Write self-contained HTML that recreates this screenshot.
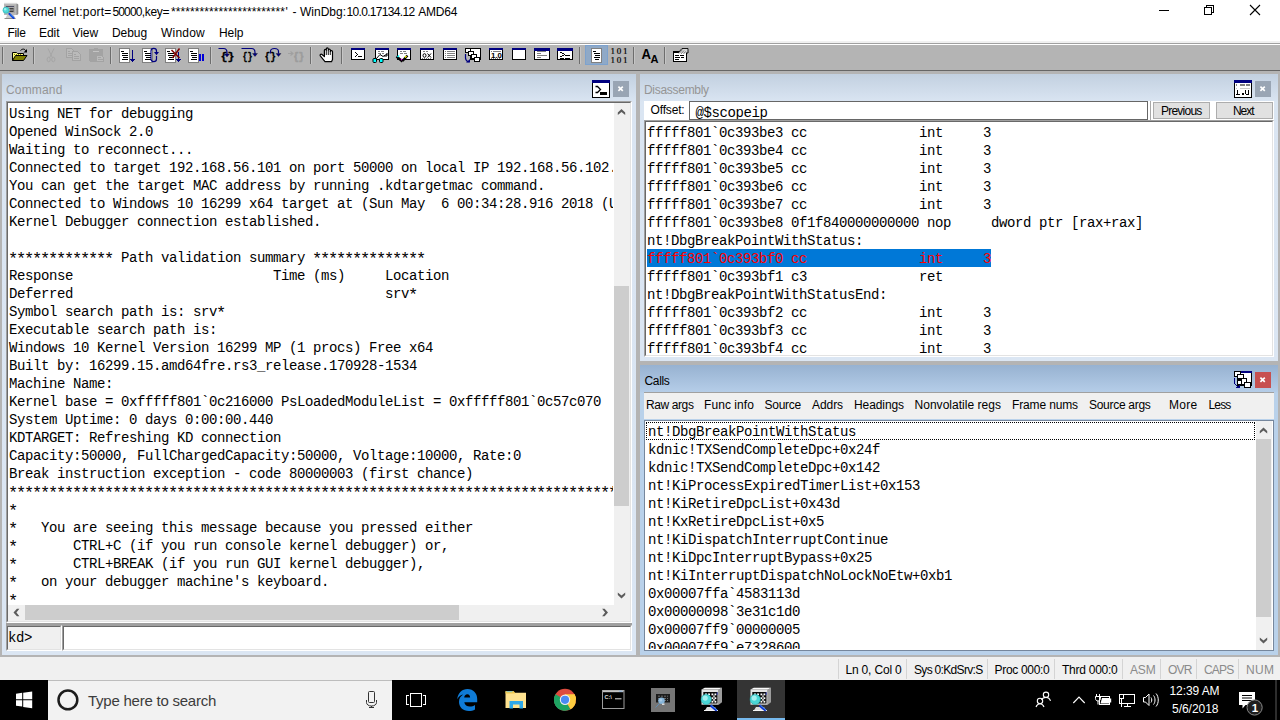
<!DOCTYPE html>
<html><head><meta charset="utf-8">
<style>
*{box-sizing:border-box;margin:0;padding:0}
html,body{width:1280px;height:720px;overflow:hidden;background:#b4b4b4;font-family:"Liberation Sans",sans-serif;font-size:12px;color:#000}
.abs{position:absolute}
.t{position:absolute;white-space:pre;line-height:16px;height:16px}
.mono{font-family:"Liberation Mono",monospace;font-size:14px;white-space:pre;line-height:20px;letter-spacing:-0.4014px}
#title{left:0;top:0;width:1280px;height:23px;background:#fff}
#menu{left:0;top:23px;width:1280px;height:20px;background:#fff}
#tb{left:0;top:41px;width:1280px;height:29px;background:linear-gradient(#f0f0f0 0,#f0f0f0 2px,#a0a0a0 2px,#a0a0a0 3px,#fff 3px,#fff 4px,#b4b4b4 4px)}
#tbline{left:0;top:70px;width:1280px;height:1px;background:#666}
.panel{position:absolute;background:linear-gradient(#c2d0e0 0,#dae5f2 28px,#dbe6f3 100%)}
.panel.act{background:linear-gradient(#97b2d1 0,#b5cde8 27px,#b9d1ea 28px,#b9d1ea 100%)}
.ast{font-size:17px;letter-spacing:-2.2017px;position:relative;top:2px;line-height:0;margin-left:-1.1px;margin-right:1.1px}
.sunk{position:absolute;border:1px solid;border-color:#a0a0a0 #fff #fff #a0a0a0}
.sunk>.in{position:absolute;left:0;top:0;right:0;bottom:0;border:1px solid;border-color:#696969 #e3e3e3 #e3e3e3 #696969;background:#fff;overflow:hidden}
.ln{position:absolute;height:18px}
.sb{position:absolute;background:#f0f0f0}
.thumb{position:absolute;background:#cdcdcd}
.btn{position:absolute;background:#e1e1e1;border:1px solid #adadad}
.xbtn{position:absolute;background:#9aa7b8}
#status{left:0;top:657px;width:1280px;height:23px;background:#f0f0f0}
.sep{position:absolute;top:659px;width:1px;height:20px;background:#d4d4d4}
#task{left:0;top:680px;width:1280px;height:40px;background:#000}
svg{position:absolute;overflow:visible}
</style></head><body>
<div id="title" class="abs"></div>
<div id="menu" class="abs"></div>
<div id="tb" class="abs"></div>
<div id="tbline" class="abs"></div>

<!-- Command panel -->
<div class="panel" style="left:2px;top:74px;width:634px;height:581px">
  <div class="sunk" style="left:4px;top:27px;width:626px;height:522px"><div class="in">
    <div class="abs" style="left:0;top:0;width:605px;height:502px;overflow:hidden"><div class="mono ln" style="left:1px;top:1px;">Using NET for debugging</div>
<div class="mono ln" style="left:1px;top:19px;">Opened WinSock 2.0</div>
<div class="mono ln" style="left:1px;top:37px;">Waiting to reconnect...</div>
<div class="mono ln" style="left:1px;top:55px;">Connected to target 192.168.56.101 on port 50000 on local IP 192.168.56.102.</div>
<div class="mono ln" style="left:1px;top:73px;">You can get the target MAC address by running .kdtargetmac command.</div>
<div class="mono ln" style="left:1px;top:91px;">Connected to Windows 10 16299 x64 target at (Sun May  6 00:34:28.916 2018 (UTC</div>
<div class="mono ln" style="left:1px;top:109px;">Kernel Debugger connection established.</div>
<div class="mono ln" style="left:1px;top:145px;"><span class="ast">*************</span> Path validation summary <span class="ast">**************</span></div>
<div class="mono ln" style="left:1px;top:163px;">Response                         Time (ms)     Location</div>
<div class="mono ln" style="left:1px;top:181px;">Deferred                                       srv<span class="ast">*</span></div>
<div class="mono ln" style="left:1px;top:199px;">Symbol search path is: srv<span class="ast">*</span></div>
<div class="mono ln" style="left:1px;top:217px;">Executable search path is: </div>
<div class="mono ln" style="left:1px;top:235px;">Windows 10 Kernel Version 16299 MP (1 procs) Free x64</div>
<div class="mono ln" style="left:1px;top:253px;">Built by: 16299.15.amd64fre.rs3_release.170928-1534</div>
<div class="mono ln" style="left:1px;top:271px;">Machine Name:</div>
<div class="mono ln" style="left:1px;top:289px;">Kernel base = 0xfffff801`0c216000 PsLoadedModuleList = 0xfffff801`0c57c070</div>
<div class="mono ln" style="left:1px;top:307px;">System Uptime: 0 days 0:00:00.440</div>
<div class="mono ln" style="left:1px;top:325px;">KDTARGET: Refreshing KD connection</div>
<div class="mono ln" style="left:1px;top:343px;">Capacity:50000, FullChargedCapacity:50000, Voltage:10000, Rate:0</div>
<div class="mono ln" style="left:1px;top:361px;">Break instruction exception - code 80000003 (first chance)</div>
<div class="mono ln" style="left:1px;top:379px;"><span class="ast">******************************************************************************************</span></div>
<div class="mono ln" style="left:1px;top:397px;"><span class="ast">*</span></div>
<div class="mono ln" style="left:1px;top:415px;"><span class="ast">*</span>   You are seeing this message because you pressed either</div>
<div class="mono ln" style="left:1px;top:433px;"><span class="ast">*</span>       CTRL+C (if you run console kernel debugger) or,</div>
<div class="mono ln" style="left:1px;top:451px;"><span class="ast">*</span>       CTRL+BREAK (if you run GUI kernel debugger),</div>
<div class="mono ln" style="left:1px;top:469px;"><span class="ast">*</span>   on your debugger machine&#x27;s keyboard.</div>
<div class="mono ln" style="left:1px;top:487px;"><span class="ast">*</span></div></div>
    <div class="sb" style="left:606px;top:0;width:16px;height:502px"><div class="thumb" style="left:0;top:183px;width:15px;height:220px"></div></div>
    <div class="sb" style="left:0;top:502px;width:622px;height:16px"><div class="thumb" style="left:17px;top:0;width:434px;height:15px"></div></div>
  </div></div>
  <div class="abs" style="left:4px;top:549px;width:626px;height:2px;background:#a0a0a0"></div>
  <div class="sunk" style="left:4px;top:551px;width:56px;height:26px"><div class="in" style="background:#f0f0f0"><div class="mono ln" style="left:0;top:1px">kd&gt;</div></div></div>
  <div class="sunk" style="left:60px;top:551px;width:570px;height:26px"><div class="in"></div></div>
</div>

<!-- Disassembly panel -->
<div class="panel" style="left:640px;top:74px;width:638px;height:287px">
  <div class="abs" style="left:4px;top:27px;width:630px;height:19px;background:#fff"></div>
  <div class="abs" style="left:49px;top:27px;width:459px;height:19px;border:1px solid #666;background:#fff;overflow:hidden"><div class="mono ln" style="left:5.500px;top:0.700px">@$scopeip</div></div>
  <div class="abs" style="left:510px;top:27px;width:1px;height:19px;background:#a8a8a8"></div>
  <div class="btn" style="left:513px;top:28px;width:57px;height:17px"></div>
  <div class="btn" style="left:576px;top:28px;width:57px;height:17px"></div>
  <div class="sunk" style="left:4px;top:46px;width:630px;height:237px"><div class="in"><div class="mono ln" style="left:1px;top:1px;">fffff801`0c393be3 cc              int     3</div>
<div class="mono ln" style="left:1px;top:19px;">fffff801`0c393be4 cc              int     3</div>
<div class="mono ln" style="left:1px;top:37px;">fffff801`0c393be5 cc              int     3</div>
<div class="mono ln" style="left:1px;top:55px;">fffff801`0c393be6 cc              int     3</div>
<div class="mono ln" style="left:1px;top:73px;">fffff801`0c393be7 cc              int     3</div>
<div class="mono ln" style="left:1px;top:91px;">fffff801`0c393be8 0f1f840000000000 nop     dword ptr [rax+rax]</div>
<div class="mono ln" style="left:1px;top:109px;">nt!DbgBreakPointWithStatus:</div>
<div class="mono ln" style="left:1px;top:127px;background:#0078d7;color:#ff0000;">fffff801`0c393bf0 cc              int     3</div>
<div class="mono ln" style="left:1px;top:145px;">fffff801`0c393bf1 c3              ret</div>
<div class="mono ln" style="left:1px;top:163px;">nt!DbgBreakPointWithStatusEnd:</div>
<div class="mono ln" style="left:1px;top:181px;">fffff801`0c393bf2 cc              int     3</div>
<div class="mono ln" style="left:1px;top:199px;">fffff801`0c393bf3 cc              int     3</div>
<div class="mono ln" style="left:1px;top:217px;">fffff801`0c393bf4 cc              int     3</div></div></div>
</div>

<!-- Calls panel -->
<div class="panel act" style="left:640px;top:365px;width:638px;height:290px">
  <div class="abs" style="left:4px;top:27px;width:630px;height:27px;background:#f0f0f0;border-top:1px solid #a0a0a0"></div>
  <div class="abs" style="left:4px;top:55px;width:630px;height:231px;border:1px solid #76879d;background:#fff;overflow:hidden">
    <div class="abs" style="left:0;top:0;width:611px;height:228px;overflow:hidden"><div class="mono ln" style="left:3px;top:1px;">nt!DbgBreakPointWithStatus</div>
<div class="mono ln" style="left:3px;top:19px;">kdnic!TXSendCompleteDpc+0x24f</div>
<div class="mono ln" style="left:3px;top:37px;">kdnic!TXSendCompleteDpc+0x142</div>
<div class="mono ln" style="left:3px;top:55px;">nt!KiProcessExpiredTimerList+0x153</div>
<div class="mono ln" style="left:3px;top:73px;">nt!KiRetireDpcList+0x43d</div>
<div class="mono ln" style="left:3px;top:91px;">nt!KxRetireDpcList+0x5</div>
<div class="mono ln" style="left:3px;top:109px;">nt!KiDispatchInterruptContinue</div>
<div class="mono ln" style="left:3px;top:127px;">nt!KiDpcInterruptBypass+0x25</div>
<div class="mono ln" style="left:3px;top:145px;">nt!KiInterruptDispatchNoLockNoEtw+0xb1</div>
<div class="mono ln" style="left:3px;top:163px;">0x00007ffa`4583113d</div>
<div class="mono ln" style="left:3px;top:181px;">0x00000098`3e31c1d0</div>
<div class="mono ln" style="left:3px;top:199px;">0x00007ff9`00000005</div>
<div class="mono ln" style="left:3px;top:217px;">0x00007ff9`e7328600</div></div>
    <div class="abs" style="left:1px;top:1px;width:609px;height:18px;border:1px dotted #000"></div>
    <div class="sb" style="left:611px;top:0;width:16px;height:229px"><div class="thumb" style="left:0;top:18px;width:15px;height:178px"></div></div>
  </div>
</div>

<div id="status" class="abs"></div>
<div class="sep" style="left:838px"></div><div class="sep" style="left:906px"></div><div class="sep" style="left:987px"></div><div class="sep" style="left:1054px"></div><div class="sep" style="left:1122px"></div><div class="sep" style="left:1160px"></div><div class="sep" style="left:1196px"></div><div class="sep" style="left:1238px"></div>
<div id="task" class="abs"></div>
<div class="abs" style="left:48px;top:680px;width:344px;height:40px;background:#f2f2f2"></div>
<svg style="left:0;top:0" width="1280" height="75" viewBox="0 0 1280 75" shape-rendering="crispEdges">
<defs>
<g id="win14"><rect x="0.5" y="0.5" width="13" height="11" fill="#fff" stroke="#000"/><rect x="0" y="0" width="14" height="2" fill="#000080"/></g>
<g id="win16"><rect x="0.5" y="0.5" width="15" height="11" fill="#fff" stroke="#000"/><rect x="0" y="0" width="16" height="3" fill="#000080"/></g>
<g id="page"><rect x="0.5" y="0.5" width="10" height="14" fill="#fff" stroke="#808080"/><path d="M2 3.5h3M3 5.5h6M3 7.5h6M4 9.5h5M3 11.5h6" stroke="#000" fill="none"/></g>
<g id="sep"><rect x="0" y="0" width="1" height="17" fill="#6d6d6d"/><rect x="1" y="0" width="1" height="17" fill="#c6c6c6"/></g>
</defs>
<!-- separators -->
<use href="#sep" x="2" y="47"/><use href="#sep" x="33" y="47"/><use href="#sep" x="110" y="47"/><use href="#sep" x="210" y="47"/><use href="#sep" x="310" y="47"/><use href="#sep" x="341" y="47"/><use href="#sep" x="579" y="47"/><use href="#sep" x="633" y="47"/><use href="#sep" x="664" y="47"/>
<!-- open folder -->
<g shape-rendering="auto">
<path d="M12.5 60.5V52.5h4l1 1h6v3" fill="#ffff80" stroke="#000" stroke-width="1"/>
<path d="M12.5 60.5l3-5h11.5l-3.5 5z" fill="#808000" stroke="#000" stroke-width="1"/>
<path d="M14 54.5h8" stroke="#808000" stroke-dasharray="1 1"/>
<path d="M20.5 50.5c2-2 4.5-2 5.5 1" fill="none" stroke="#000"/><path d="M27 49v3.500h-3.500z" fill="#000"/>
</g>
<!-- scissors (disabled) -->
<g shape-rendering="auto" fill="none" stroke="#a6a6a6" stroke-width="1">
<path d="M48 48.500l4.300 9M54 48.500l-4.300 9"/><ellipse cx="48.700" cy="59.500" rx="1.600" ry="2.300"/><ellipse cx="53.300" cy="59.500" rx="1.600" ry="2.300"/>
</g>
<!-- copy (disabled) -->
<g fill="#bababa" stroke="#a3a3a3">
<path d="M66.500 48.500h5l2 2v7h-7z"/><path d="M68 51.500h2M68 53.500h4M68 55.500h4" />
<path d="M72.500 51.500h5l3 3v6h-8z"/><path d="M74 54.500h2M74 56.500h5M74 58.500h5"/>
</g>
<!-- paste (disabled) -->
<g>
<rect x="89" y="49" width="14" height="12.500" rx="1" fill="#a3a3a3"/><rect x="94" y="48" width="4" height="1.500" fill="#a3a3a3"/><rect x="93" y="51" width="6" height="1" fill="#c4c4c4"/>
<path d="M96.500 55.500h5l2 2v4h-7z" fill="#bababa" stroke="#a3a3a3"/><path d="M97.500 57.500h3M97.500 59.500h5" stroke="#a3a3a3"/>
</g>
<!-- go -->
<use href="#page" x="119" y="48"/>
<path d="M132.500 50v10" stroke="#000080"/><path d="M130 59h5v1h-1v1h-1v1h-1v-1h-1v-1h-1z" fill="#000080"/>
<!-- restart -->
<use href="#page" x="142" y="48"/>
<g shape-rendering="auto"><path d="M156.500 52v-1c0-3.500-5.500-3.500-5.500 0v8c0 3.500 5.500 3.500 5.500 0v-3" fill="none" stroke="#000080" stroke-width="1.200"/><path d="M154 52h5l-2.500 3.200z" fill="#000080"/></g>
<!-- stop debugging -->
<use href="#page" x="165" y="48"/>
<path d="M178.500 52v8" stroke="#000080"/><path d="M176 59h5v1h-1v1h-1v1h-1v-1h-1v-1h-1z" fill="#000080"/>
<g shape-rendering="auto"><path d="M171.500 50l8 8M179.500 48.500l-7 9.500" stroke="#800000" stroke-width="1.500" fill="none"/></g>
<!-- break -->
<use href="#page" x="188" y="48"/>
<rect x="199" y="54" width="2" height="7" fill="#0000d8"/><rect x="202" y="54" width="2" height="7" fill="#0000d8"/>
<!-- step into -->
<g shape-rendering="auto" font-family="Liberation Mono" font-weight="bold" font-size="11.500" fill="#000" stroke="#000" stroke-width="0.300">
<text x="220.500" y="59.500" textLength="14" lengthAdjust="spacingAndGlyphs">{}</text>
<path d="M218.500 48.500h5c3 0 3.500 1.500 3.500 4v2" fill="none" stroke="#000080" stroke-width="1.200"/><path d="M224.500 54h5l-2.500 3z" fill="#000080"/>
<!-- step over -->
<text x="242.500" y="59.500" textLength="10" lengthAdjust="spacingAndGlyphs">{}</text>
<path d="M241.500 48.500h10c3 0 3.500 1.500 3.500 4v1.500" fill="none" stroke="#000080" stroke-width="1.200"/><path d="M252.500 53.500h5l-2.500 3z" fill="#000080"/>
<!-- step out -->
<text x="264.500" y="59.500" textLength="11.500" lengthAdjust="spacingAndGlyphs">{}</text>
<path d="M270.500 53.500v-2c0-4 8-4 8 0v2" fill="none" stroke="#000080" stroke-width="1.200"/><path d="M276 53.500h5l-2.500 3z" fill="#000080"/>
<!-- run to cursor disabled -->
<text x="293.500" y="60" textLength="10.500" lengthAdjust="spacingAndGlyphs" fill="#9c9c9c" stroke="#9c9c9c" stroke-width="0.700" font-weight="bold">{}</text>
<path d="M288 53.500h5M290.500 51.500l2.500 2-2.500 2" fill="none" stroke="#a0a0a0" stroke-width="1.100"/>
<!-- hand -->
<path d="M324.400 56.500V50.300c0-1.300 1.900-1.300 1.900 0V49c0-1.400 2-1.400 2 0v1c0-1.300 2-1.300 2 0v1.500c0-1.300 2.200-1.300 2.200 0.300V59.500l-1 2.200H325l-4.700-5.800c-0.800-1.200 0.600-2.300 1.700-1.400z" fill="#fff" stroke="#000" stroke-width="1.200" stroke-linejoin="round"/>
<path d="M326.300 50.300v4.700M328.300 50v5M330.300 51.500v3.500" stroke="#000" stroke-width="0.900"/>
</g>
<!-- window icons -->
<use href="#win14" x="351" y="48"/><path d="M355 52.500h1M356 53.500h1M357 54.500h1M356 55.500h1M355 56.500h1M358 56.500h4" stroke="#000"/>
<use href="#win14" x="375" y="48"/><path d="M378 51.500h2M381 51.500h3M378 53.500h3M382 53.500h2" stroke="#808080"/>
<g shape-rendering="auto"><path d="M376 59l4-4.500 3 2 4-2.500" fill="none" stroke="#000"/><path d="M387 53v3h-3" fill="none" stroke="#000"/><rect x="373" y="58.500" width="3.500" height="4" rx="1" fill="#00ffff" stroke="#000"/><rect x="379.500" y="58.500" width="3.500" height="4" rx="1" fill="#00ffff" stroke="#000"/><path d="M376.500 59.500h3" stroke="#000"/></g>
<use href="#win14" x="397" y="48"/><path d="M400 51.500h2M403 51.500h3M400 53.500h3M404 53.500h3" stroke="#808080"/>
<g shape-rendering="auto"><path d="M396.500 56.500l6 5" stroke="#000" stroke-width="2.400"/><path d="M397.500 57l1.500-1.500" stroke="#00ffff" stroke-width="1.500"/><path d="M401 60l1.500-1" stroke="#ff00ff" stroke-width="1.500"/><path d="M402.500 61l5-5.500" stroke="#000" stroke-width="2.400"/><path d="M405 57.500l1.500-1.500" stroke="#ffff00" stroke-width="1.500"/></g>
<use href="#win14" x="420" y="48"/><path d="M423 51.500h2M426 51.500h2" stroke="#808080"/>
<g shape-rendering="auto" fill="none" stroke="#000"><ellipse cx="424.500" cy="55.500" rx="1.500" ry="1.800"/><path d="M427.500 53.500l3.500 4M431 53.500l-3.500 4"/><path d="M422 58.500h10" stroke="#808080" stroke-dasharray="1 1"/></g>
<use href="#win14" x="443" y="48"/><path d="M445 51.500h1M447 51.500h8M445 53.500h1M447 53.500h8M445 55.500h1M447 55.500h8M445 57.500h1M447 57.500h8" stroke="#808080"/>
<!-- call stack -->
<rect x="472" y="48" width="9" height="2" fill="#000080"/><rect x="470.500" y="48.500" width="10" height="11" fill="#fff" stroke="#000"/>
<g fill="#fff" stroke="#000"><rect x="465.500" y="48.500" width="5" height="4"/><rect x="468.500" y="51.500" width="5" height="4"/><rect x="471.500" y="54.500" width="5" height="4"/><rect x="474.500" y="57.500" width="5" height="4"/></g>
<g shape-rendering="auto"><path d="M465.500 54v4c0 2 1 3 3 4" fill="none" stroke="#000080" stroke-width="1.200"/><path d="M466 62.500h4v-3.500z" fill="#000080"/></g>
<use href="#win14" x="489" y="48"/><path d="M491 51.500h1M493 51.500h8" stroke="#808080"/>
<g shape-rendering="auto" font-family="Liberation Sans" font-weight="bold" font-size="7.500" fill="#000"><text x="491" y="58" textLength="11" lengthAdjust="spacingAndGlyphs">1.0</text></g>
<path d="M491 58.500h10" stroke="#808080" stroke-dasharray="1 1"/>
<use href="#win14" x="512" y="48"/>
<use href="#win16" x="534" y="48"/><path d="M537 51.500h9M537 53.500h4M537 55.500h10M537 57.500h4" stroke="#808080"/>
<use href="#win16" x="557" y="48"/><path d="M560 52.500h2M562 53.500h2M564 54.500h1M562 55.500h2M560 56.500h2M565 55.500h5M560 58.500h4M565 58.500h5" stroke="#000"/>
<!-- pressed source-mode -->
<rect x="585.500" y="45.500" width="22" height="19" fill="#8fa9c7" stroke="#7da2ce"/>
<rect x="591.500" y="48.500" width="10" height="14" fill="#fff" stroke="#808080"/><path d="M593 51.500h3M594 53.500h6M595 55.500h5M594 57.500h6M595 59.500h4" stroke="#000"/>
<!-- 101 101 -->
<g shape-rendering="auto" font-family="Liberation Serif" font-size="9" fill="#000" stroke="#000" stroke-width="0.200"><text x="610.500" y="54.300" textLength="17" lengthAdjust="spacing">101</text><text x="610.500" y="63.300" textLength="17" lengthAdjust="spacing">101</text></g>
<!-- AA -->
<g shape-rendering="auto" font-family="Liberation Sans" font-weight="bold" fill="#000"><text x="641.500" y="59" font-size="14" textLength="9.500" lengthAdjust="spacingAndGlyphs">A</text><text x="650.500" y="62.500" font-size="10" textLength="8" lengthAdjust="spacingAndGlyphs">A</text></g>
<!-- options -->
<rect x="673.500" y="51.500" width="13" height="10" fill="#fff" stroke="#000" stroke-width="1"/><rect x="673" y="51" width="8" height="2" fill="#000"/>
<path d="M675 55.500h4M680 55.500h4M675 57.500h5M681 57.500h3M675 59.500h4" stroke="#000"/>
<g shape-rendering="auto"><path d="M678 53l4-4.500h6v4.500h-2" fill="#d8d8d8" stroke="#000" stroke-width="0.900"/><path d="M679 53.500l3.500-4M681 54l3-3.500M683.500 54l2-2.500" stroke="#555" stroke-width="0.700"/></g>
</svg>

<svg style="left:0;top:0" width="1280" height="680" viewBox="0 0 1280 680">
<defs>
<path id="chev" d="M-3.700 2.900L-3.700 0.400L0 -3L3.700 0.400L3.700 2.900L0 -0.100z" fill="#5c5c5c"/>
<g id="xw"><path d="M-2.200 -2.100L2.200 2.100M2.200 -2.100L-2.200 2.100" stroke="#fff" stroke-width="1.700" fill="none"/></g>
</defs>
<!-- app icon -->
<g>
<path d="M4 3.500h13l1.200 1v9.500l-1.200 1h-13z" fill="#b9b9b9"/><path d="M16.500 3.500l1.700 1v9.500l-1.700 1z" fill="#8d8d8d"/><path d="M4 3.300h13" stroke="#d9d9d9" stroke-width="0.800"/>
<rect x="5" y="5.500" width="10" height="7.500" fill="#a9a9a9"/><rect x="6" y="6" width="8" height="0.800" fill="#3a3a55"/><rect x="9.500" y="8" width="4" height="0.800" fill="#222"/><rect x="9.500" y="11" width="4" height="0.800" fill="#222"/><rect x="10.500" y="8.500" width="1" height="2.500" fill="#555"/><rect x="12.500" y="8.500" width="1" height="2.500" fill="#555"/>
<path d="M7 15h7l1 2.500 1 1h-11l1-1z" fill="#c9c9c9"/><path d="M4.500 18.500h11" stroke="#8a8a8a" stroke-width="1"/>
<circle cx="6" cy="10.200" r="3.100" fill="#4fd8d8" stroke="#2aa" stroke-width="0.500"/><circle cx="5.200" cy="9.300" r="1.200" fill="#9ff0f0"/>
<path d="M9.300 13.800l4.300 4.200" stroke="#0a35d8" stroke-width="1.900" stroke-linecap="round"/><path d="M10 14.200l3.300 3.300" stroke="#29a9ff" stroke-width="0.700"/>
</g>
<!-- window controls -->
<g shape-rendering="crispEdges" fill="none" stroke="#000" stroke-width="1">
<path d="M1159 10.500h10"/>
<rect x="1204.500" y="7.500" width="7" height="7"/><path d="M1206.500 7.500v-2h7v7h-2"/>
</g>
<path d="M1250 5l10 10M1260 5l-10 10" stroke="#000" stroke-width="1.100" fill="none"/>
<!-- command panel header icon -->
<g shape-rendering="crispEdges"><rect x="592.500" y="80.500" width="17" height="17" fill="#fff" stroke="#000"/><rect x="592" y="80" width="18" height="3" fill="#000080"/><rect x="600" y="92" width="7" height="3" fill="#000"/></g>
<path d="M595.500 86.500h2l3 3-3 3h-2" fill="none" stroke="#000" stroke-width="1.300"/>
<rect x="613" y="81" width="16" height="16" fill="#99a5b4"/><use href="#xw" x="620.600" y="88.700"/>
<!-- disassembly header icon -->
<g shape-rendering="crispEdges"><rect x="1234.500" y="80.500" width="17" height="17" fill="#fff" stroke="#000"/><rect x="1234" y="80" width="18" height="3" fill="#000080"/>
<path d="M1236 85h1M1240 85h5M1246 85h4" stroke="#808080" stroke-width="2"/><path d="M1236 88.500h1M1240 88.500h10" stroke="#c8c8c8"/>
<path d="M1237.500 90v4M1236 94.500h4" stroke="#000"/><rect x="1242" y="93" width="2" height="2" fill="#000"/><path d="M1245.500 90v4M1248.500 90v4M1246 94.500h3" stroke="#000"/></g>
<rect x="1255" y="81" width="16" height="16" fill="#99a5b4"/><use href="#xw" x="1262.600" y="88.700"/>
<!-- calls header icon -->
<g shape-rendering="crispEdges">
<rect x="1240" y="371" width="12" height="15" fill="#000"/><rect x="1241" y="371" width="11" height="2" fill="#000080"/><rect x="1241" y="373" width="10" height="12" fill="#fff"/>
<rect x="1234" y="371" width="7" height="6" fill="#000"/><rect x="1235" y="372" width="5" height="4" fill="#fff"/>
<rect x="1237" y="374" width="7" height="12" fill="#000"/><rect x="1238" y="375" width="5" height="3" fill="#fff"/><rect x="1238" y="381" width="3" height="3" fill="#fff"/>
<rect x="1241" y="378" width="6" height="7" fill="#000"/><rect x="1242" y="379" width="4" height="5" fill="#fff"/>
<rect x="1244" y="382" width="7" height="6" fill="#000"/><rect x="1245" y="383" width="5" height="4" fill="#fff"/>
<path d="M1234.500 378v6" stroke="#000080"/><path d="M1235 384h1v1h1v1h1v1h-1v-1h-1v-1h-1z" fill="#000080"/><path d="M1236 388h4v-3h-1v1h-1v1h-2z" fill="#000080"/>
</g>
<rect x="1255" y="372" width="16" height="16" fill="#c75050"/><use href="#xw" x="1262.600" y="379.700"/>
<!-- scroll arrows: command -->
<use href="#chev" x="621.500" y="112"/><use href="#chev" transform="translate(621.500 595.500) rotate(180)"/>
<use href="#chev" transform="translate(16.500 612.500) rotate(-90)"/><use href="#chev" transform="translate(605 612.500) rotate(90)"/>
<!-- scroll arrows: calls -->
<use href="#chev" x="1263.500" y="430.500"/><use href="#chev" transform="translate(1263.500 640.500) rotate(180)"/>
</svg>

<svg style="left:0;top:680px" width="1280" height="40" viewBox="0 680 1280 40">
<defs>
<g id="wdbg">
<path d="M0.500 2h17.200v15.200h-17.200z" fill="#e4e4e4"/><path d="M17.700 2l3.300-1.800v14.500l-3.300 2.500z" fill="#9c9c9c"/><path d="M0.500 2l3.300-1.800h17.200l-3.300 1.800z" fill="#fafafa"/>
<rect x="2.300" y="4.500" width="14.200" height="11.500" fill="#0c0c0c"/>
<g fill="#fff"><rect x="4" y="6" width="2" height="1.600"/><rect x="7" y="6" width="2" height="1.600"/><rect x="10.500" y="6" width="1.800" height="1.800"/><rect x="13.500" y="6" width="1.800" height="1.800"/><rect x="10.500" y="9.800" width="1.800" height="1.800"/><rect x="13.500" y="9.800" width="1.800" height="1.800"/><rect x="10.500" y="13.300" width="1.800" height="1.800"/><rect x="13.500" y="13.300" width="1.800" height="1.800"/><path d="M12 8l2 1.800M14 8l-2 1.800M12 11.500l2 1.800M14 11.500l-2 1.800" stroke="#fff" stroke-width="0.700"/></g>
<rect x="15.800" y="4.800" width="0.700" height="2.500" fill="#2233dd"/>
<path d="M6 19.500h8l1.500 2.500 1.500 1.300h-14l1.500-1.300z" fill="#dcdcdc"/><path d="M3 23h14" stroke="#fff" stroke-width="0.900"/>
<circle cx="5.200" cy="11.900" r="5.200" fill="#4ad6d6"/><circle cx="4.200" cy="10.600" r="2.600" fill="#a5f0f0"/><circle cx="5.200" cy="11.900" r="5.200" fill="none" stroke="#189a9a" stroke-width="0.500"/>
<path d="M9.500 17.800l6.300 5.400" stroke="#0a2fd0" stroke-width="2.300"/><path d="M10.500 17.800l5.800 5" stroke="#6cc4ff" stroke-width="0.700"/>
</g>
</defs>
<rect x="48" y="680" width="344" height="1" fill="#bdbdbd"/>
<!-- windows logo -->
<g fill="#fff"><path d="M16 693.700l6.200-0.900v6.400h-6.200z"/><path d="M23.200 692.700l9-1.200v7.700h-9z"/><path d="M16 700.200h6.200v6.400l-6.200-0.900z"/><path d="M23.200 700.200h9v8l-9-1.300z"/></g>
<!-- cortana -->
<circle cx="67.900" cy="699.900" r="9.400" fill="none" stroke="#1c1c1c" stroke-width="2.500"/>
<!-- mic -->
<g fill="none" stroke="#333" stroke-width="1"><rect x="368.500" y="691.500" width="6" height="11" rx="1"/><path d="M366.500 700v2.500c0 2 2 3.500 5 3.500s5-1.500 5-3.500v-2.500M371.500 706v1.500M369 707.500h5"/></g>
<!-- task view -->
<g fill="none" stroke="#fff" stroke-width="1" shape-rendering="crispEdges"><rect x="410.500" y="693.500" width="11" height="13"/><path d="M409 695.500h-2.500v9h2.500M423 695.500h2.500v9h-2.500"/></g>
<!-- edge -->
<path fill-rule="evenodd" d="M457.200 699.300C458 693 462 689 467.500 689C473.500 689 477.200 693.500 477.200 699L477.200 702.200L464.300 702.200C464.600 705 467 706.600 470 706.600C471.800 706.600 473.500 706 475 705L475 709.500C473.300 710.500 471 711 468.800 711C463 711 459 707 459 702C459 698.800 460.500 696.200 463.200 694.600C460.800 695 458.500 696.600 457.200 699.300ZM464.200 697.600C464.400 695.600 465.600 694.300 467.300 694.300C469.200 694.300 470.100 695.700 470.100 697.600Z" fill="#0f7bd6"/>
<!-- explorer -->
<path d="M505.500 691.500h8l1.200 1.300h11.300v15.200h-20.500z" fill="#ffe390"/><path d="M505.500 691h8l1.200 1.300v1.200h-9.200z" fill="#f4c94a"/><path d="M506.500 691.700h6" stroke="#5fc0f0" stroke-width="0.800"/>
<path d="M509.500 708.500v-7.500h13.500v7.500h-3.500v-4h-6.500v4z" fill="#2ea8e8"/>
<!-- chrome -->
<g>
<circle cx="565" cy="699.800" r="11" fill="#dd4b3e"/>
<path d="M565 699.800L555.470 694.300A11 11 0 0 0 570.500 709.330z" fill="#1ea362"/>
<path d="M565 699.800L570.500 709.330A11 11 0 0 0 574.530 694.300z" fill="#fecd40"/>
<path d="M565 694.300h9.530a11 11 0 0 1 1.470 5.500h-11z" fill="#fecd40"/>
<path d="M565 699.800l-4.760 2.750 -4.770 -8.250 A11 11 0 0 0 559.500 709.330 l5.500 -5z" fill="#1ea362"/>
<circle cx="565" cy="699.800" r="5.200" fill="#f1f1f1"/><circle cx="565" cy="699.800" r="4.100" fill="#4a8af4"/>
</g>
<!-- cmd -->
<rect x="602.500" y="690.500" width="21.500" height="18" fill="#000" stroke="#9c9c9c" stroke-width="1"/><rect x="603" y="690.500" width="20.500" height="1.700" fill="#c4c4c4"/><rect x="619" y="690.700" width="3.500" height="1" fill="#8db5e2"/>
<text x="604.500" y="699.300" font-family="Liberation Sans" font-size="5.500" fill="#ddd" font-weight="bold">C:\</text><rect x="615" y="698.300" width="6.500" height="1" fill="#ddd"/>
<!-- gray app -->
<rect x="651" y="688" width="24" height="24" fill="#767676"/><rect x="656" y="694" width="14" height="8.500" fill="#1c1c1c"/><path d="M658 696.200h10M658 698.500h10M658 700.500h10" stroke="#6a6a6a" stroke-width="1" stroke-dasharray="2 1"/>
<circle cx="661.500" cy="700.800" r="3.300" fill="#86b4d8"/><circle cx="660.800" cy="700" r="1.500" fill="#a9cbe6"/><path d="M659.500 703.500l-4 4" stroke="#5f8db5" stroke-width="1"/><rect x="662" y="703.500" width="2.500" height="1.500" fill="#dcdcdc"/>
<!-- windbg icons -->
<use href="#wdbg" x="701" y="687.500"/>
<rect x="737" y="680" width="48" height="38" fill="#343434"/><rect x="737" y="718" width="48" height="2" fill="#76b9ed"/>
<use href="#wdbg" x="750" y="687.500"/>
<!-- people -->
<g fill="none" stroke="#fff" stroke-width="1.100"><circle cx="1046" cy="694.800" r="2.700"/><path d="M1041.500 700c1-2 3-2.600 4.500-2.600s3.500 0.600 4.500 3.500"/><circle cx="1040" cy="701" r="2.700"/><path d="M1036 707c0.800-2.200 2.500-3.300 4-3.300s3.200 1.100 4 3.300"/></g>
<!-- chevron -->
<path d="M1073.300 703l5.700-6 5.700 6" fill="none" stroke="#fff" stroke-width="1.100"/>
<!-- battery -->
<g fill="none" stroke="#fff" stroke-width="1"><rect x="1099.500" y="696.500" width="10" height="8"/><path d="M1110.500 698.500v4" stroke-width="1.400"/><path d="M1096.500 694v2.500M1099.500 694v2.500" /><path d="M1095.500 696.500h5v2c0 1.500-1 2.500-2.500 2.500s-2.500-1-2.500-2.500zM1098 701v3.500"/></g><path d="M1102 698h7v5.500h-8.500z" fill="#fff"/>
<!-- network -->
<g fill="none" stroke="#fff" stroke-width="1" shape-rendering="crispEdges"><rect x="1119.500" y="694.500" width="15" height="9"/><path d="M1127.500 703.500v3M1124 706.500h7M1121.500 698v9"/><rect x="1119.500" y="694.500" width="4" height="4"/></g>
<!-- volume -->
<g fill="none" stroke="#fff" stroke-width="1"><path d="M1143.500 697.500h2l3.500-3.500v11.500l-3.500-3.500h-2z"/><path d="M1151 697.500c1 1.200 1 3.800 0 5M1153.500 695.500c2 2.300 2 6.700 0 9M1156 693.500c3 3.300 3 9.700 0 13"/></g>
<!-- notification -->
<path d="M1239 692h16v13h-9.500l-3 3.500v-3.500h-3.500z" fill="#fff"/><path d="M1242 695.500h10M1242 698h10M1242 700.500h10" stroke="#000" stroke-width="1"/>
<circle cx="1254.600" cy="707.500" r="7.600" fill="#1f1f1f" stroke="#8a8a8a" stroke-width="1"/>
<text x="1251.800" y="711.800" font-family="Liberation Sans" font-size="11.500" fill="#fff" font-weight="bold">1</text>
<rect x="1275.500" y="680" width="1" height="40" fill="#5a5a5a"/>
</svg>

<span class="t" style="left:23.10px;top:4.34px;font-size:12px;color:#000;letter-spacing:-0.298px;">Kernel</span>
<span class="t" style="left:59.50px;top:4.34px;font-size:12px;color:#000;letter-spacing:0.200px;">&#x27;net:port=</span>
<span class="t" style="left:112.50px;top:4.34px;font-size:12px;color:#000;letter-spacing:-0.875px;">50000</span>
<span class="t" style="left:141.70px;top:4.34px;font-size:12px;color:#000;letter-spacing:-0.323px;">,key=</span>
<span class="t" style="left:171.00px;top:4.34px;font-size:12px;color:#000;letter-spacing:0.080px;">************************</span>
<span class="t" style="left:285.50px;top:4.34px;font-size:12px;color:#000;letter-spacing:0.403px;">&#x27;</span>
<span class="t" style="left:292.60px;top:4.34px;font-size:12px;color:#000;letter-spacing:0.800px;">-</span>
<span class="t" style="left:300.00px;top:4.34px;font-size:12px;color:#000;letter-spacing:-0.002px;">WinDbg:</span>
<span class="t" style="left:346.50px;top:4.34px;font-size:12px;color:#000;letter-spacing:-0.673px;">10.0.17134.12</span>
<span class="t" style="left:418.30px;top:4.34px;font-size:12px;color:#000;letter-spacing:-0.223px;">AMD64</span>
<span class="t" style="left:7.50px;top:25.34px;font-size:12px;color:#000;letter-spacing:-0.336px;">File</span>
<span class="t" style="left:39.00px;top:25.34px;font-size:12px;color:#000;letter-spacing:-0.047px;">Edit</span>
<span class="t" style="left:72.50px;top:25.34px;font-size:12px;color:#000;letter-spacing:-0.074px;">View</span>
<span class="t" style="left:112.00px;top:25.34px;font-size:12px;color:#000;letter-spacing:-0.075px;">Debug</span>
<span class="t" style="left:161.00px;top:25.34px;font-size:12px;color:#000;letter-spacing:0.219px;">Window</span>
<span class="t" style="left:219.00px;top:25.34px;font-size:12px;color:#000;letter-spacing:-0.047px;">Help</span>
<span class="t" style="left:6.00px;top:81.84px;font-size:12px;color:#959595;letter-spacing:0.163px;">Command</span>
<span class="t" style="left:644.00px;top:81.84px;font-size:12px;color:#959595;letter-spacing:-0.292px;">Disassembly</span>
<span class="t" style="left:644.50px;top:372.84px;font-size:12px;color:#000;letter-spacing:-0.334px;">Calls</span>
<span class="t" style="left:650.50px;top:101.84px;font-size:12px;color:#000;letter-spacing:-0.163px;">Offset:</span>
<span class="t" style="left:1161.00px;top:103.34px;font-size:12px;color:#000;letter-spacing:-0.773px;">Previous</span>
<span class="t" style="left:1233.00px;top:103.34px;font-size:12px;color:#000;letter-spacing:-1.047px;">Next</span>
<span class="t" style="left:646.00px;top:396.84px;font-size:12px;color:#000;letter-spacing:-0.398px;">Raw args</span>
<span class="t" style="left:704.00px;top:396.84px;font-size:12px;color:#000;letter-spacing:0.071px;">Func info</span>
<span class="t" style="left:764.50px;top:396.84px;font-size:12px;color:#000;letter-spacing:-0.255px;">Source</span>
<span class="t" style="left:812.00px;top:396.84px;font-size:12px;color:#000;letter-spacing:-0.072px;">Addrs</span>
<span class="t" style="left:854.00px;top:396.84px;font-size:12px;color:#000;letter-spacing:-0.088px;">Headings</span>
<span class="t" style="left:914.50px;top:396.84px;font-size:12px;color:#000;letter-spacing:0.028px;">Nonvolatile regs</span>
<span class="t" style="left:1012.00px;top:396.84px;font-size:12px;color:#000;letter-spacing:-0.136px;">Frame nums</span>
<span class="t" style="left:1089.00px;top:396.84px;font-size:12px;color:#000;letter-spacing:-0.291px;">Source args</span>
<span class="t" style="left:1169.00px;top:396.84px;font-size:12px;color:#000;letter-spacing:0.289px;">More</span>
<span class="t" style="left:1208.50px;top:396.84px;font-size:12px;color:#000;letter-spacing:-0.840px;">Less</span>
<span class="t" style="left:845.50px;top:661.84px;font-size:12px;color:#000;letter-spacing:-0.186px;">Ln 0, Col 0</span>
<span class="t" style="left:914.00px;top:661.84px;font-size:12px;color:#000;letter-spacing:-0.683px;">Sys 0:KdSrv:S</span>
<span class="t" style="left:994.50px;top:661.84px;font-size:12px;color:#000;letter-spacing:-0.305px;">Proc 000:0</span>
<span class="t" style="left:1062.00px;top:661.84px;font-size:12px;color:#000;letter-spacing:-0.255px;">Thrd 000:0</span>
<span class="t" style="left:1130.00px;top:661.84px;font-size:12px;color:#8a8a8a;letter-spacing:-0.172px;">ASM</span>
<span class="t" style="left:1168.00px;top:661.84px;font-size:12px;color:#8a8a8a;letter-spacing:-0.839px;">OVR</span>
<span class="t" style="left:1204.00px;top:661.84px;font-size:12px;color:#8a8a8a;letter-spacing:-0.797px;">CAPS</span>
<span class="t" style="left:1246.00px;top:661.84px;font-size:12px;color:#8a8a8a;letter-spacing:0.391px;">NUM</span>
<span class="t" style="left:88.00px;top:693.00px;font-size:15px;color:#3c3c3c;letter-spacing:-0.241px;">Type here to search</span>
<span class="t" style="left:1169.50px;top:682.84px;font-size:12px;color:#fff;letter-spacing:-0.088px;">12:39 AM</span>
<span class="t" style="left:1172.00px;top:700.84px;font-size:12px;color:#fff;letter-spacing:-0.027px;">5/6/2018</span>
</body></html>
